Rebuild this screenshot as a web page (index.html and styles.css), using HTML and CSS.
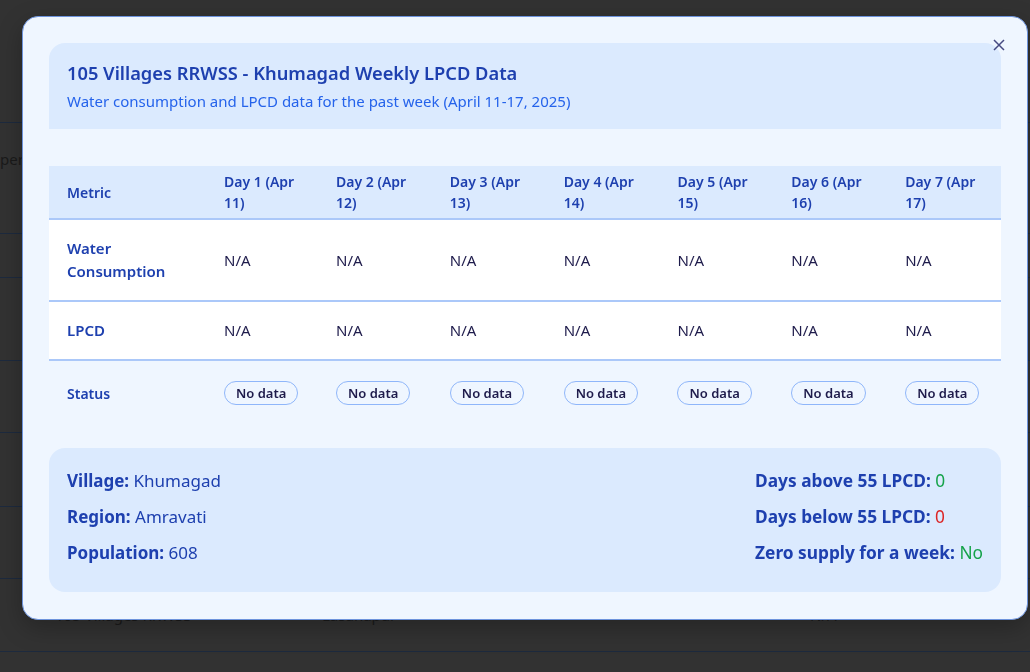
FILE: index.html
```html
<!DOCTYPE html>
<html lang="en">
<head>
<meta charset="utf-8">
<title>105 Villages RRWSS - Khumagad Weekly LPCD Data</title>
<link rel="stylesheet" href="styles.css">
</head>
<body>
<div class="page">
  <div class="bg-row h0"></div>
  <div class="bg-row h1"><span class="bg-text per">per</span></div>
  <div class="bg-row h2"></div>
  <div class="bg-row h3"></div>
  <div class="bg-row h4"></div>
  <div class="bg-row h5"></div>
  <div class="bg-row h6"></div>
  <div class="bg-row h7"><span class="bg-text c1">105 Villages RRWSS</span><span class="bg-text c2">Lasanapur</span><span class="bg-text c3">N/A</span></div>
  <div class="bg-row h8"></div>
</div>

<div class="modal" role="dialog" aria-labelledby="modal-title">
  <button class="close" aria-label="Close">
    <svg width="12" height="12" viewBox="0 0 12 12"><path d="M1 1L11 11M11 1L1 11" stroke="currentColor" stroke-width="1.5" fill="none"/></svg>
  </button>

  <header class="modal-head">
    <h2 id="modal-title" class="title">105 Villages RRWSS - Khumagad Weekly LPCD Data</h2>
    <p class="subtitle">Water consumption and LPCD data for the past week (April 11-17, 2025)</p>
  </header>

  <table class="lpcd">
    <colgroup>
      <col class="c-metric"><col class="c-day1"><col class="c-day"><col class="c-day"><col class="c-day"><col class="c-day"><col class="c-day"><col class="c-day">
    </colgroup>
    <thead>
      <tr>
        <th>Metric</th>
        <th>Day 1 (Apr 11)</th>
        <th>Day 2 (Apr 12)</th>
        <th>Day 3 (Apr 13)</th>
        <th>Day 4 (Apr 14)</th>
        <th>Day 5 (Apr 15)</th>
        <th>Day 6 (Apr 16)</th>
        <th>Day 7 (Apr 17)</th>
      </tr>
    </thead>
    <tbody>
      <tr class="data-row">
        <td class="metric">Water Consumption</td>
        <td>N/A</td><td>N/A</td><td>N/A</td><td>N/A</td><td>N/A</td><td>N/A</td><td>N/A</td>
      </tr>
      <tr class="data-row">
        <td class="metric">LPCD</td>
        <td>N/A</td><td>N/A</td><td>N/A</td><td>N/A</td><td>N/A</td><td>N/A</td><td>N/A</td>
      </tr>
      <tr class="status-row">
        <td class="metric">Status</td>
        <td><span class="badge">No data</span></td>
        <td><span class="badge">No data</span></td>
        <td><span class="badge">No data</span></td>
        <td><span class="badge">No data</span></td>
        <td><span class="badge">No data</span></td>
        <td><span class="badge">No data</span></td>
        <td><span class="badge">No data</span></td>
      </tr>
    </tbody>
  </table>

  <section class="summary">
    <div class="summary-col">
      <p><strong>Village:</strong> Khumagad</p>
      <p><strong>Region:</strong> Amravati</p>
      <p><strong>Population:</strong> 608</p>
    </div>
    <div class="summary-col">
      <p><strong>Days above 55 LPCD:</strong> <span class="good">0</span></p>
      <p><strong>Days below 55 LPCD:</strong> <span class="bad">0</span></p>
      <p><strong>Zero supply for a week:</strong> <span class="good">No</span></p>
    </div>
  </section>
</div>
</body>
</html>
```

FILE: styles.css
```css
* { box-sizing: border-box; }

html, body {
  margin: 0;
  padding: 0;
  height: 100%;
}

body {
  background: #323232;
  font-family: "Noto Sans", "Open Sans", sans-serif;
  overflow: hidden;
}

/* dimmed page behind the dialog */
.page {
  display: flex;
  flex-direction: column;
}
.bg-row {
  position: relative;
  border-bottom: 1px solid #1d2a3e;
  flex: none;
}
.h0 { height: 123px; }
.h1 { height: 111px; display: flex; align-items: center; }
.h2 { height: 44px; }
.h3 { height: 83px; }
.h4 { height: 72px; }
.h5 { height: 74px; }
.h6 { height: 72px; }
.h7 { height: 73px; display: flex; align-items: center; }
.h8 { height: 40px; border-bottom: 0; }
.bg-text {
  color: #1a1a1a;
  font-size: 15px;
  white-space: nowrap;
}
.per { margin-left: 0; margin-top: -38px; }
.c1 { margin-left: 55px; width: 267px; }
.c2 { width: 488px; }

/* dialog */
.modal {
  position: fixed;
  top: 16px;
  left: 22px;
  width: 1006px;
  height: 604px;
  background: #eff6ff;
  border: 1px solid #6d93dc;
  border-radius: 16px;
  padding: 26px;
  display: flex;
  flex-direction: column;
  box-shadow: 0 8px 24px rgba(0, 0, 0, 0.25);
}

.close {
  position: absolute;
  top: 20px;
  right: 20px;
  width: 16px;
  height: 16px;
  padding: 0;
  border: 0;
  background: transparent;
  color: #464a82;
  display: flex;
  align-items: center;
  justify-content: center;
  cursor: pointer;
}

.modal-head {
  background: #dbeafe;
  border-radius: 16px 16px 0 0;
  padding: 18px 18px 18px;
  height: 86px;
}
.title {
  margin: 0;
  font-size: 18.3px;
  line-height: 24px;
  font-weight: 600;
  color: #1e40af;
}
.subtitle {
  margin: 6px 0 0;
  font-size: 15px;
  line-height: 20px;
  color: #2563eb;
}

/* table */
.lpcd {
  margin-top: 37px;
  width: 952px;
  border-collapse: collapse;
  table-layout: fixed;
}
.c-metric { width: 157px; }
.c-day1 { width: 112px; }
.c-day { width: 113.83px; }

.lpcd th {
  background: #dbeafe;
  color: #1e40af;
  font-weight: 600;
  font-size: 14px;
  line-height: 21px;
  text-align: left;
  padding: 5px 18px;
  border-bottom: 2px solid #abc8f9;
}
.lpcd td {
  padding: 17px 18px;
  font-size: 15px;
  line-height: 23px;
  color: #1e1b4b;
  text-align: left;
  vertical-align: middle;
}
.data-row td {
  background: #ffffff;
  border-bottom: 2px solid #abc8f9;
}
.lpcd td.metric {
  color: #1e40af;
  font-weight: 600;
  font-size: 15px;
}
.status-row td {
  padding: 20px 18px;
  height: 64px;
}
.lpcd .status-row td.metric { font-size: 14px; }

.badge {
  display: inline-block;
  border: 1px solid #8fb6fa;
  border-radius: 999px;
  padding: 0 11px;
  font-size: 13px;
  line-height: 22px;
  font-weight: 600;
  color: #1e1b4b;
}

/* summary card */
.summary {
  margin-top: 23px;
  background: #dbeafe;
  border-radius: 16px;
  padding: 20px 18px 16px;
  display: flex;
  justify-content: space-between;
  color: #1e40af;
}
.summary p {
  margin: 0 0 10px;
  font-size: 17px;
  line-height: 26px;
}
.summary-col + .summary-col p { font-size: 17.3px; }
.summary strong { font-weight: 700; }
.good { color: #16a34a; }
.bad { color: #dc2626; }
```
